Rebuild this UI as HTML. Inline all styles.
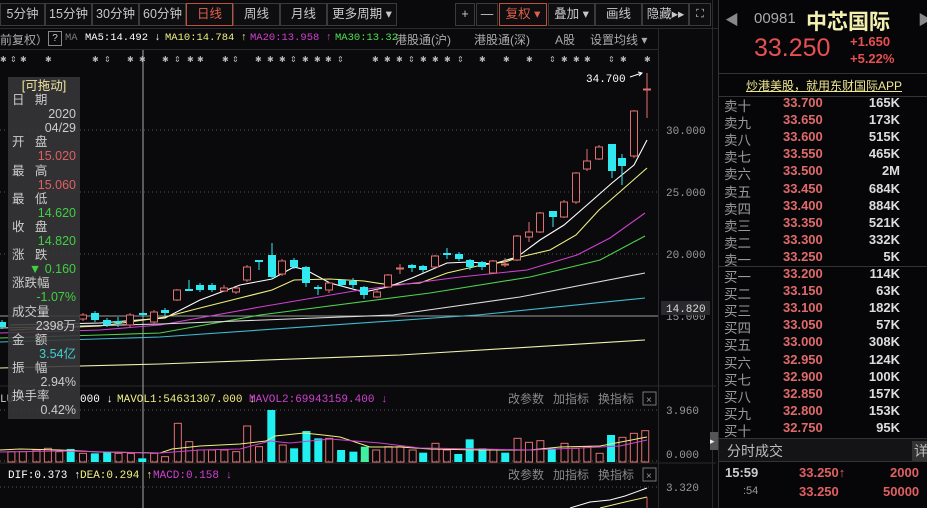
<!DOCTYPE html>
<html><head><meta charset="utf-8">
<style>
*{margin:0;padding:0;box-sizing:border-box}
body{width:927px;height:508px;background:#0a0a0c;overflow:hidden;position:relative;font-family:"Liberation Sans","Noto Sans CJK SC",sans-serif;color:#bbb;font-size:12px}
.a{position:absolute;white-space:nowrap}
.btn{position:absolute;top:3px;height:23px;border:1px solid #3a3a3a;color:#c8c8c8;font-size:12.5px;line-height:21px;text-align:center;background:#0e0e10}
.mono{font-family:"Liberation Mono","Noto Sans CJK SC",monospace}
</style></head><body>
<div class="btn" style="left:0;width:45px">5分钟</div>
<div class="btn" style="left:45px;width:47px">15分钟</div>
<div class="btn" style="left:92px;width:47px">30分钟</div>
<div class="btn" style="left:139px;width:47px">60分钟</div>
<div class="btn" style="left:186px;width:47px;border-color:#c0503c;color:#e2604a">日线</div>
<div class="btn" style="left:233px;width:47px">周线</div>
<div class="btn" style="left:280px;width:47px">月线</div>
<div class="btn" style="left:327px;width:70px">更多周期 ▾</div>
<div class="btn" style="left:455px;width:20px">+</div>
<div class="btn" style="left:476px;width:22px">—</div>
<div class="btn" style="left:499px;width:48px;border-color:#c0503c;color:#e2604a">复权 ▾</div>
<div class="btn" style="left:548px;width:47px">叠加 ▾</div>
<div class="btn" style="left:595px;width:47px">画线</div>
<div class="btn" style="left:642px;width:47px">隐藏▸▸</div>
<div class="btn" style="left:689px;width:22px;font-size:11px">⛶</div>
<div class="a" style="left:0;top:28px;width:718px;height:1px;background:#2a2a2a"></div>
<div class="a" style="left:0;top:31px;font-size:12px;color:#aaa">前复权）</div>
<div class="a" style="left:48px;top:31px;width:14px;height:15px;border:1px solid #888;font-size:10px;text-align:center;color:#ccc;line-height:13px">?</div>
<div class="a mono" style="left:65px;top:32px;font-size:10.5px;color:#777">MA</div>
<div class="a mono" style="left:85px;top:32px;font-size:10.5px;color:#fff">MA5:14.492 ↓</div>
<div class="a mono" style="left:165px;top:32px;font-size:10.5px;color:#f0f080">MA10:14.784 ↑</div>
<div class="a mono" style="left:250px;top:32px;font-size:10.5px;color:#d040d0">MA20:13.958 ↑</div>
<div class="a mono" style="left:335px;top:32px;font-size:10.5px;color:#50e050">MA30:13.32</div>
<div class="a" style="left:395px;top:31px;color:#aaa">港股通(沪)</div>
<div class="a" style="left:474px;top:31px;color:#aaa">港股通(深)</div>
<div class="a" style="left:555px;top:31px;color:#aaa">A股</div>
<div class="a" style="left:590px;top:31px;color:#aaa">设置均线 ▾</div>
<div class="a" style="left:0;top:49px;width:658px;height:1px;background:#2a2a2a"></div>
<div class="a" style="left:658px;top:28px;width:1px;height:480px;background:#2a2a2a"></div>
<div class="a" style="left:712px;top:0;width:1px;height:508px;background:#2a2a2a"></div>
<div class="a" style="left:718px;top:0;width:1px;height:508px;background:#333"></div>

<svg class="a" style="left:0;top:0" width="716" height="508" id="ch">
<g stroke="#555" stroke-dasharray="1,3">
<line x1="0" y1="130" x2="658" y2="130"/><line x1="0" y1="192" x2="658" y2="192"/><line x1="0" y1="254" x2="658" y2="254"/>
<line x1="0" y1="410" x2="658" y2="410"/><line x1="0" y1="461" x2="658" y2="461"/><line x1="0" y1="487" x2="658" y2="487"/>
</g>
<line x1="0" y1="316" x2="658" y2="316" stroke="#999"/>
<line x1="0" y1="386" x2="716" y2="386" stroke="#2a2a2a"/>
<line x1="0" y1="463" x2="716" y2="463" stroke="#2a2a2a"/>
<line x1="143" y1="50" x2="143" y2="508" stroke="#aaa"/>
<g font-family="Liberation Mono,monospace" font-size="11" fill="#999">
<text x="666" y="134">30.000</text><text x="666" y="196">25.000</text><text x="666" y="258">20.000</text><text x="666" y="320">15.000</text>
<text x="666" y="414">3.960</text><text x="666" y="458">0.000</text><text x="666" y="491">3.320</text>
</g>
<rect x="661" y="301" width="49" height="14" fill="#2a2a2e"/>
<text x="666" y="312" font-family="Liberation Mono,monospace" font-size="11" fill="#ddd">14.820</text>
<text x="586" y="82" font-family="Liberation Mono,monospace" font-size="11" fill="#fff">34.700</text>
<path d="M630 77 L642 73 M638 72 L642 73 L639 76" stroke="#fff" fill="none"/>
<g id="stars" font-family="DejaVu Sans,sans-serif" font-size="8" fill="#bbb"></g>
<g id="ma" fill="none" stroke-width="1.1"></g>
<g id="cd"></g>
<g id="vol"></g>
<path d="M570 508 L590 502 L610 500 L625 496 L647 488" stroke="#fff" fill="none"/>
<path d="M600 508 L625 502 L647 497" stroke="#f0f080" fill="none"/>
<line x1="647" y1="497" x2="647" y2="508" stroke="#e06060"/>
<g font-size="12" fill="#888" font-family="Liberation Sans,Noto Sans CJK SC,sans-serif">
<text x="508" y="403">改参数</text><text x="553" y="403">加指标</text><text x="598" y="403">换指标</text>
<text x="508" y="479">改参数</text><text x="553" y="479">加指标</text><text x="598" y="479">换指标</text>
</g>
<rect x="643" y="392" width="13" height="13" fill="none" stroke="#777"/><text x="646" y="403" font-size="10" fill="#999">×</text>
<rect x="643" y="468" width="13" height="13" fill="none" stroke="#777"/><text x="646" y="479" font-size="10" fill="#999">×</text>
<g font-family="Liberation Mono,monospace" font-size="11">
<text x="0" y="402" fill="#ccc">LU</text>
<text x="80" y="402" fill="#fff">000 ↓</text>
<text x="117" y="402" fill="#f0f080">MAVOL1:54631307.000 ↓</text>
<text x="249" y="402" fill="#d040d0">MAVOL2:69943159.400 ↓</text>
<text x="8" y="478" fill="#fff">DIF:0.373 ↑</text>
<text x="80" y="478" fill="#f0f080">DEA:0.294 ↑</text>
<text x="153" y="478" fill="#d040d0">MACD:0.158 ↓</text>
</g>
</svg>

<div class="a" style="left:8px;top:77px;width:72px;height:342px;background:rgba(55,55,58,0.88);font-size:12.5px;line-height:14.1px;color:#ccc;padding:2px 4px">
<div style="color:#f0e6a0;text-align:center">[可拖动]</div>
<div>日&nbsp;&nbsp;&nbsp;期</div><div style="text-align:right">2020</div><div style="text-align:right">04/29</div>
<div>开&nbsp;&nbsp;&nbsp;盘</div><div style="text-align:right;color:#e06060">15.020</div>
<div>最&nbsp;&nbsp;&nbsp;高</div><div style="text-align:right;color:#e06060">15.060</div>
<div>最&nbsp;&nbsp;&nbsp;低</div><div style="text-align:right;color:#40d040">14.620</div>
<div>收&nbsp;&nbsp;&nbsp;盘</div><div style="text-align:right;color:#40d040">14.820</div>
<div>涨&nbsp;&nbsp;&nbsp;跌</div><div style="text-align:right;color:#40d040">▼ 0.160</div>
<div>涨跌幅</div><div style="text-align:right;color:#40d040">-1.07%</div>
<div>成交量</div><div style="text-align:right">2398万</div>
<div>金&nbsp;&nbsp;&nbsp;额</div><div style="text-align:right;color:#40d0d0">3.54亿</div>
<div>振&nbsp;&nbsp;&nbsp;幅</div><div style="text-align:right">2.94%</div>
<div>换手率</div><div style="text-align:right">0.42%</div>
</div>

<div class="a" style="left:719px;top:0;width:208px;height:508px;background:#060608"></div>
<div class="a" style="left:725px;top:10px;color:#888;font-size:14px">◀</div>
<div class="a" style="left:754px;top:10px;color:#aaa;font-size:15px">00981</div>
<div class="a" style="left:806px;top:6px;color:#f4f0b0;font-size:21px;font-weight:bold;font-family:'Noto Sans CJK SC',sans-serif">中芯国际</div>
<div class="a" style="left:918px;top:10px;color:#888;font-size:14px">▶</div>
<div class="a" style="left:754px;top:34px;color:#e85050;font-size:25px">33.250</div>
<div class="a" style="left:850px;top:34px;color:#e85050;font-size:13px;font-weight:bold">+1.650</div>
<div class="a" style="left:850px;top:51px;color:#e85050;font-size:13px;font-weight:bold">+5.22%</div>
<div class="a" style="left:719px;top:73px;width:208px;height:1px;background:#333"></div>
<div class="a" style="left:746px;top:77px;color:#f0e890;font-size:12px;text-decoration:underline">炒港美股，就用东财国际APP</div>
<div class="a" style="left:719px;top:96px;width:208px;height:1px;background:#333"></div>
<div class="a" id="ob" style="left:724px;top:95px;width:200px;font-size:13px"></div>
<div class="a" style="left:719px;top:266px;width:208px;height:1px;background:#333"></div>
<div class="a" style="left:719px;top:438px;width:208px;height:24px;background:#141416;border-top:1px solid #333;border-bottom:1px solid #333"></div>
<div class="a" style="left:727px;top:441px;color:#bbb;font-size:14px">分时成交</div>
<div class="a" style="left:912px;top:441px;color:#bbb;font-size:14px;background:#333;padding:0 2px">详</div>
<div class="a" style="left:710px;top:432px;width:8px;height:18px;background:#555;color:#eee;font-size:9px;line-height:18px">▸</div>
<div class="a" style="left:725px;top:465px;color:#ccc;font-size:13px;font-weight:bold">15:59</div>
<div class="a" style="left:799px;top:465px;color:#e06060;font-size:13px;font-weight:bold">33.250↑</div>
<div class="a" style="left:890px;top:465px;color:#e06060;font-size:13px;font-weight:bold">2000</div>
<div class="a" style="left:743px;top:485px;color:#999;font-size:11px">:54</div>
<div class="a" style="left:799px;top:484px;color:#e06060;font-size:13px;font-weight:bold">33.250</div>
<div class="a" style="left:883px;top:484px;color:#e06060;font-size:13px;font-weight:bold">50000</div>

<script>
var NS="http://www.w3.org/2000/svg";
function el(p,t,a){var e=document.createElementNS(NS,t);for(var k in a)e.setAttribute(k,a[k]);p.appendChild(e);return e}
var st=document.getElementById('stars');
[3,13,23,48,95,107,130,142,165,177,190,200,225,235,258,270,282,293,305,317,328,340,375,387,399,411,423,435,447,460,482,506,529,552,564,576,587,611,623,647].forEach(function(x,i){var t=el(st,'text',{x:x-3,y:62});t.textContent=(i%4==1)?'⇕':'✱';});
var ma=document.getElementById('ma');
[["#fff","10,325 100,323 165,318 200,300 240,285 272,279 294,267 306,270 330,283 364,292 388,287 412,278 447,263 470,262 493,264 517,257 540,240 564,225 587,205 612,183 634,165 647,140"],
["#f0f080","10,330 100,326 165,317 200,308 240,298 272,290 294,280 330,279 364,281 390,285 420,283 447,273 482,265 505,262 520,257 550,250 576,235 599,210 622,190 647,168"],
["#d040d0","0,333 100,330 160,325 260,307 360,290 460,277 527,270 577,255 610,238 645,213"],
["#50d050","0,338 100,335 160,333 260,315 430,293 530,277 600,260 645,236"],
["#ddd","0,328 160,324 393,315 520,297 645,273"],
["#40b8d0","0,342 160,337 477,315 645,298"],
["#f0f0b0","0,368 160,364 400,355 645,340"]].forEach(function(m){el(ma,'polyline',{points:m[1],stroke:m[0]})});
var cd=document.getElementById('cd');
var C=[[2,322,327,320,329,'c'],[83,315,319,313,321,'r'],[95,313,320,311,322,'c'],[107,320,325,318,327,'c'],[118,321,323,317,327,'c'],[130,315,325,313,327,'r'],[143,313,315,312,317,'c'],[154,312,322,310,324,'r'],[165,310,313,308,316,'c'],
[177,290,300,289,301,'r'],[189,289,291,280,291,'c'],[200,285,290,283,292,'c'],[212,285,290,283,292,'c'],[224,288,291,285,292,'r'],[236,288,292,287,294,'r'],[247,267,280,265,282,'r'],[259,260,262,260,270,'c'],[272,255,277,243,278,'c'],[282,261,274,259,276,'r'],[294,260,267,258,269,'c'],[306,267,283,266,287,'c'],[318,287,289,285,295,'c'],[329,283,290,282,293,'r'],[342,280,285,279,287,'c'],[353,281,285,278,288,'c'],[364,287,295,286,299,'c'],[377,292,297,289,298,'r'],[388,275,287,274,288,'r'],[400,268,269,264,274,'r'],[412,265,268,264,272,'c'],[423,266,270,265,273,'c'],[435,256,267,255,268,'r'],[447,253,255,248,259,'c'],[459,254,259,252,261,'c'],[470,260,267,259,270,'c'],[482,262,267,261,270,'c'],[493,261,273,260,274,'r'],[505,264,265,258,267,'r'],[517,236,260,235,261,'r'],[529,232,237,222,242,'r'],[540,213,232,212,233,'r'],[553,211,217,211,227,'c'],[564,202,217,200,218,'r'],[576,173,202,172,204,'r'],[587,161,169,149,171,'r'],[599,147,159,145,160,'r'],[612,144,171,144,178,'c'],[622,158,166,154,185,'c'],[634,111,156,110,158,'r'],[647,89,90,73,118,'r']];
C.forEach(function(c){var col=c[5]=='r'?'#e07070':'#30e8f0';
el(cd,'line',{x1:c[0],y1:c[3],x2:c[0],y2:c[4],stroke:col});
if(c[5]=='r')el(cd,'rect',{x:c[0]-3.5,y:c[1],width:7,height:Math.max(1,c[2]-c[1]),fill:'#0a0a0c',stroke:col});
else el(cd,'rect',{x:c[0]-4,y:c[1],width:8,height:Math.max(1,c[2]-c[1]),fill:col});});
var vol=document.getElementById('vol');
var V=[[25,215,'r'],[50,215,'r'],[80,210,'r'],[105,205,'r'],[130,215,'r'],[155,207,'c'],[182,220,'r'],[208,220,'c'],[235,215,'c'],[260,220,'r'],[287,220,'r'],[312,235,'c'],[338,220,'r'],[362,230,'r'],[390,130,'r'],[415,185,'r'],[440,210,'r'],[465,210,'r'],[492,210,'r'],[518,215,'r'],[542,138,'r'],[568,200,'r'],[595,90,'c'],[620,195,'r'],[645,205,'c'],[672,153,'c'],[698,175,'c'],[722,175,'r'],[748,210,'c'],[775,215,'c'],[800,200,'g'],[825,210,'r'],[852,200,'r'],[878,200,'r'],[905,210,'r'],[928,218,'c'],[955,190,'r'],[980,210,'r'],[1005,222,'c'],[1030,178,'c'],[1058,205,'c'],[1082,210,'r'],[1108,218,'c'],[1135,175,'r'],[1160,187,'r'],[1185,182,'r'],[1210,205,'c'],[1238,190,'r'],[1262,205,'r'],[1288,200,'r'],[1315,220,'r'],[1340,165,'c'],[1365,172,'r'],[1390,160,'r'],[1415,152,'r']];
V.forEach(function(v){var x=v[0]/2.193,y=380+v[1]/3,h=462-y;var col=v[2]=='r'?'#e07070':(v[2]=='g'?'#40f0a0':'#20f0f0');
if(v[2]=='r')el(vol,'rect',{x:x-3.5,y:y,width:7,height:h,fill:'none',stroke:col});else el(vol,'rect',{x:x-4,y:y,width:8,height:h,fill:col});});
el(vol,'polyline',{points:"0,450 20,449 60,450 100,452 160,453 172,449 200,446 240,444 266,441 275,436 304,433 323,435 340,437 370,447 400,447 430,449 480,450 530,450 560,447 600,446 647,437",stroke:"#f0f080",fill:"none"});
el(vol,'polyline',{points:"0,452 60,451 110,452 160,453 200,450 240,449 270,441 290,443 330,439 380,443 420,448 480,449 530,450 580,448 620,446 647,440",stroke:"#d040d0",fill:"none"});
var ob=document.getElementById('ob');
var asks=[["卖十","33.700","165K"],["卖九","33.650","173K"],["卖八","33.600","515K"],["卖七","33.550","465K"],["卖六","33.500","2M"],["卖五","33.450","684K"],["卖四","33.400","884K"],["卖三","33.350","521K"],["卖二","33.300","332K"],["卖一","33.250","5K"]];
var bids=[["买一","33.200","114K"],["买二","33.150","63K"],["买三","33.100","182K"],["买四","33.050","57K"],["买五","33.000","308K"],["买六","32.950","124K"],["买七","32.900","100K"],["买八","32.850","157K"],["买九","32.800","153K"],["买十","32.750","95K"]];
var h='';
function row(r,top){return '<div style="position:absolute;top:'+top+'px;left:0;color:#999;font-size:13.5px">'+r[0]+'</div><div style="position:absolute;top:'+top+'px;left:59px;color:#e06a6a;font-weight:bold">'+r[1]+'</div><div style="position:absolute;top:'+top+'px;left:120px;width:56px;text-align:right;color:#ddd;font-weight:bold">'+r[2]+'</div>';}
asks.forEach(function(r,i){h+=row(r,i*17.1)});
bids.forEach(function(r,i){h+=row(r,171+i*17.1)});
ob.innerHTML=h;
</script>
</body></html>
